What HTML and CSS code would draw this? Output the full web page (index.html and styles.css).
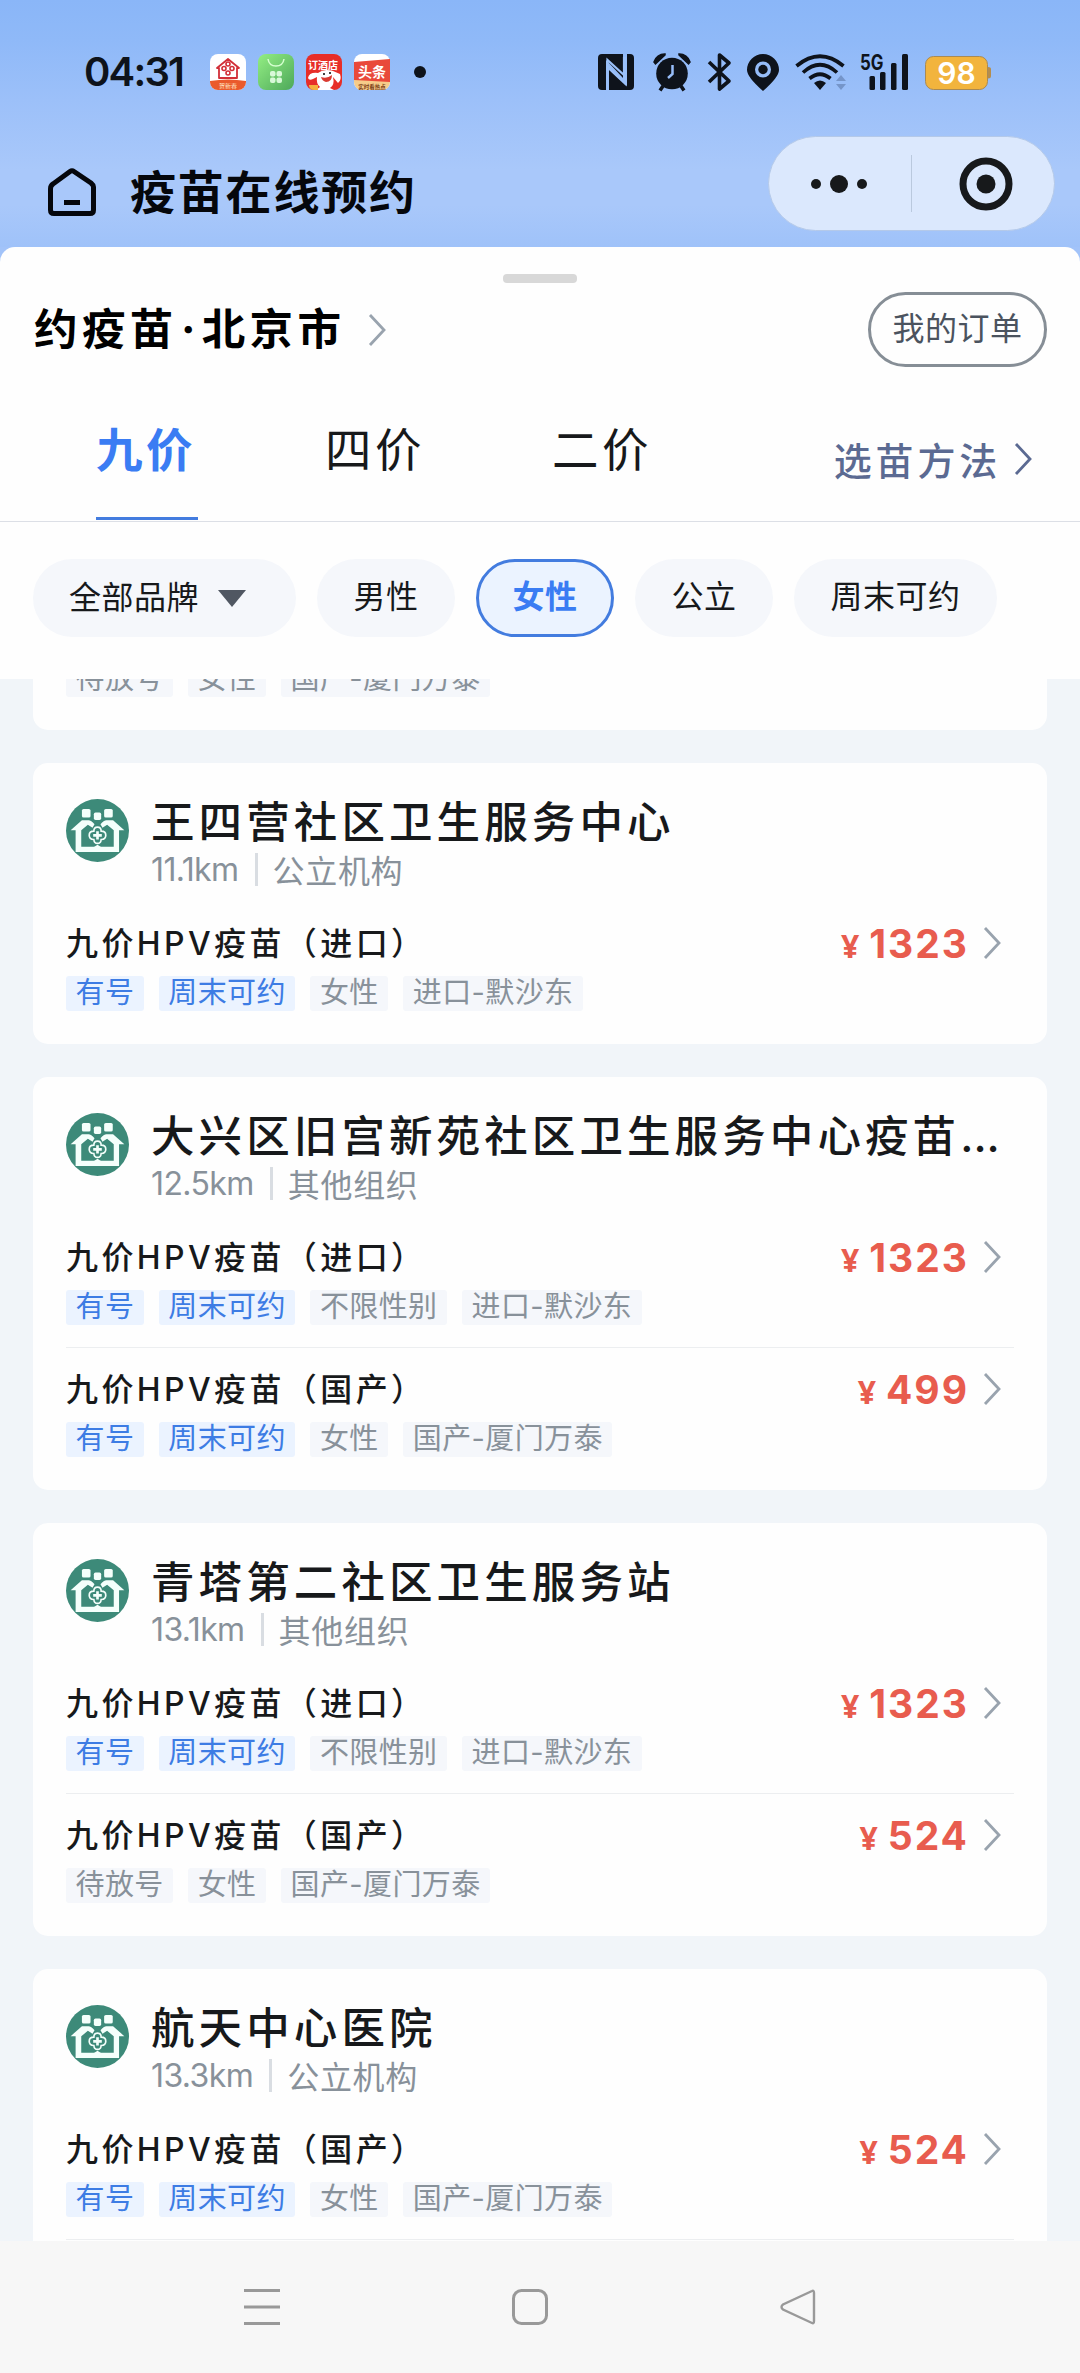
FILE: index.html
```html
<!DOCTYPE html>
<html lang="zh-CN">
<head>
<meta charset="utf-8">
<title>疫苗在线预约</title>
<link rel="stylesheet" href="styles.css">
</head>
<body>
<svg class="defs" width="0" height="0">
  <symbol id="chev" viewBox="0 0 18 34"><path d="M2 2 16 17 2 32" fill="none" stroke="currentColor" stroke-width="2.8"/></symbol>
  <symbol id="clinic" viewBox="0 0 190 190">
    <circle cx="95" cy="95" r="95" fill="#3d8a79"/>
    <g fill="#f4fffb">
      <rect x="48" y="30" width="26" height="26" rx="5"/>
      <rect x="115" y="30" width="26" height="26" rx="5"/>
      <rect x="84" y="41" width="22" height="22" rx="5"/>
      <path d="M14 94 48 64H68Q76 64 86 76L80 87 66 78 46 94V144H144V94L124 78 110 87 104 76Q114 64 122 64H142L176 94H160V160H29V94Z"/>
      <path d="M82 146 95 138 108 146Z"/>
    </g>
    <path d="M84 97Q84 85 95 85T106 97Q120 97 120 109T106 122Q105 134 95 134T84 122Q70 121 70 109T84 97Z" fill="#3d8a79" stroke="#f4fffb" stroke-width="5"/>
    <path d="M95 97V122M82 109.500H108" stroke="#f4fffb" stroke-width="8"/>
  </symbol>
</svg>
<div class="phone">
  <div class="top">
    <div class="status">
      <span class="time">04:31</span>
      <div class="apps">
        <svg viewBox="0 0 36 36"><rect width="36" height="36" rx="8" fill="#fff"/><path d="M0 27Q18 24 36 27V28A8 8 0 0 1 28 36H8A8 8 0 0 1 0 28Z" fill="#ea5a2c"/><path d="M7 14 18 5 29 14H27V24H9V14Z" fill="none" stroke="#d22f38" stroke-width="1.8" stroke-linejoin="round"/><g fill="none" stroke="#d22f38" stroke-width="1.6"><circle cx="18" cy="10" r="2"/><circle cx="14" cy="14.500" r="2"/><circle cx="22" cy="14.500" r="2"/><circle cx="18" cy="19" r="2"/></g><text x="18" y="34" text-anchor="middle" font-size="6" fill="#ffe3c0">贺新春</text></svg>
        <svg viewBox="0 0 36 36"><defs><linearGradient id="g" x2="1" y2="1"><stop stop-color="#93ee83"/><stop offset="1" stop-color="#4da85a"/></linearGradient></defs><rect width="36" height="36" rx="8" fill="url(#g)"/><path d="M10 5Q11 12 18 12T26 5" fill="none" stroke="#d5ffd0" stroke-width="1.500"/><g fill="#d8f9d8"><rect x="12" y="17" width="5.500" height="5.500" rx="2"/><rect x="18.500" y="17" width="5.500" height="5.500" rx="2"/><rect x="12" y="23.500" width="5.500" height="5.500" rx="2"/><rect x="18.500" y="23.500" width="5.500" height="5.500" rx="2"/></g></svg>
        <svg viewBox="0 0 36 36"><rect width="36" height="36" rx="8" fill="#e72e28"/><text x="17" y="15" text-anchor="middle" font-size="10" font-weight="700" fill="#fff">订酒店</text><path d="M2 24Q3 18 12 19 18 14 27 17L34 20Q36 26 32 29L27 23Q29 31 24 34L28 36H10L14 33Q10 30 11 23L7 25Q3 27 2 24Z" fill="#fff"/><path d="M15 23Q21 25 26 21 26 28 20 28 16 27 15 23Z" fill="#d93a30"/><circle cx="18" cy="20" r="1"/><circle cx="24" cy="19" r="1"/><path d="M3 31H12V36H8Q4 36 3 32Z" fill="#f4b03d"/></svg>
        <svg viewBox="0 0 36 36"><rect width="36" height="36" rx="8" fill="#fff"/><path d="M0 8 36 5V28H0Z" fill="#e9493a"/><path d="M0 26 36 28A8 8 0 0 1 28 36H8A8 8 0 0 1 0 28Z" fill="#f6cc8a"/><text x="18" y="23" text-anchor="middle" font-size="14" font-weight="700" fill="#fff">头条</text><text x="18" y="34.500" text-anchor="middle" font-size="5.500" font-weight="700" fill="#7a3b14">实时看热点</text></svg>
      </div>
      <i class="dot"></i>
      <svg class="sys" viewBox="598 50 396 44" width="396" height="44" fill="#0e131b">
        <path fill-rule="evenodd" d="M602 54H623V78L609 63 606 60V90H602Q598 90 598 86V58Q598 54 602 54ZM627 54H630Q634 54 634 58V86Q634 90 630 90H609V69L627 86Z"/><path d="M607.500 87V60L624 75V57M609.500 66V69L625.500 84V57" fill="none" stroke="#9ac0f9" stroke-width="2.200"/>
        <circle cx="672" cy="73.500" r="15.800"/><path d="M663 86 660 90.500M681 86 684 90.500" stroke="#0e131b" stroke-width="3.500"/><path d="M654 62A11 11 0 0 1 665 54L665 55 655.500 64ZM690 62A11 11 0 0 0 679 54L679 55 688.500 64Z" stroke="#0e131b" stroke-width="1.500"/><path d="M672.500 65V74L668 78" fill="none" stroke="#97bdf9" stroke-width="2.500"/>
        <path d="M709 62 729 81 719.500 89V55L729 63 709 82" fill="none" stroke="#0e131b" stroke-width="3.600" stroke-linejoin="round"/>
        <path fill-rule="evenodd" d="M763 54A16 16 0 0 1 779 70Q779 77 763 91 747 77 747 70A16 16 0 0 1 763 54ZM763 61.500A8 8 0 1 0 763 77.500 8 8 0 1 0 763 61.500Z"/><circle cx="763" cy="69.500" r="4.700"/>
        <g fill="none" stroke="#0e131b" stroke-width="3.700"><path d="M796.500 66Q820 46.500 843.500 66M803 72.500Q820 57 837 72.500M809.500 78.500Q820 70 830.500 78.500"/></g><path d="M814 83Q820 78 826 83L820 90Z"/>
        <path d="M836 81 841 75 846 81ZM836 84H846L841 90Z" fill="#7595c9"/>
        <text x="860" y="69.500" font-size="21" font-weight="700" textLength="23.500" lengthAdjust="spacingAndGlyphs" class="lat">5G</text>
        <rect x="869.500" y="76" width="5.500" height="14" rx="1.500"/><rect x="880" y="72" width="5.500" height="18" rx="1.500"/><rect x="891" y="63" width="5.500" height="27" rx="1.500"/><rect x="902" y="54" width="6" height="36" rx="1.500"/>
        <path d="M988 67Q991 67 991 69V76Q991 78.500 988 78.500Z" fill="#b58d4d"/><rect x="925.500" y="56.500" width="62" height="33" rx="8" fill="#f2b43d" stroke="#a98a54"/>
        <text x="956.500" y="84" font-size="30" font-weight="600" text-anchor="middle" fill="#fff" class="lat">98</text>
      </svg>
    </div>
    <div class="bar">
      <svg class="home" viewBox="0 0 48 48" width="48" height="48"><path d="M5 16Q2.500 17.500 2.500 21V42Q2.500 45.500 6 45.500H42Q45.500 45.500 45.500 42V19Q45.500 17 43 15L26 3.500Q24 2 22 3.500Z" fill="none" stroke="#05070c" stroke-width="5"/><path d="M16 34.500H32" stroke="#05070c" stroke-width="5"/></svg>
      <h1>疫苗在线预约</h1>
      <div class="capsule">
        <svg width="56" height="20" viewBox="0 0 56 20" fill="#17191b"><circle cx="5" cy="10" r="5"/><circle cx="28" cy="10" r="9"/><circle cx="51" cy="10" r="5"/></svg>
        <i></i>
        <svg width="54" height="54" viewBox="0 0 54 54"><circle cx="27" cy="27" r="23" fill="none" stroke="#17191b" stroke-width="7"/><circle cx="27" cy="27" r="9.500" fill="#17191b"/></svg>
      </div>
    </div>
  </div>

  <div class="sheet">
    <i class="handle"></i>
    <div class="city">
      <h2>约疫苗<span class="mid">·</span>北京市</h2>
      <svg class="chev"><use href="#chev"/></svg>
      <span class="orders">我的订单</span>
    </div>
    <div class="tabs">
      <span class="tab on">九价</span><span class="tab">四价</span><span class="tab">二价</span>
      <span class="how">选苗方法<svg class="chev"><use href="#chev"/></svg></span>
    </div>
    <div class="filters">
      <span class="pill brand">全部品牌<i></i></span><span class="pill">男性</span><span class="pill on">女性</span><span class="pill">公立</span><span class="pill">周末可约</span>
    </div>
  </div>

  <div class="list">
    <section class="card cut">
      <div class="tags"><b>待放号</b><b>女性</b><b>国产-厦门万泰</b></div>
    </section>
    <section class="card">
      <div class="head"><svg class="logo"><use href="#clinic"/></svg><div><h3>王四营社区卫生服务中心</h3><p><span>11.1km</span><i></i>公立机构</p></div></div>
      <div class="item"><div class="row"><span class="name">九价HPV疫苗（进口）</span><span class="price"><small>¥</small>1323</span><svg class="chev"><use href="#chev"/></svg></div><div class="tags"><b class="a">有号</b><b class="a">周末可约</b><b>女性</b><b>进口-默沙东</b></div></div>
    </section>
    <section class="card">
      <div class="head"><svg class="logo"><use href="#clinic"/></svg><div><h3>大兴区旧宫新苑社区卫生服务中心疫苗<span class="dots">...</span></h3><p><span>12.5km</span><i></i>其他组织</p></div></div>
      <div class="item"><div class="row"><span class="name">九价HPV疫苗（进口）</span><span class="price"><small>¥</small>1323</span><svg class="chev"><use href="#chev"/></svg></div><div class="tags"><b class="a">有号</b><b class="a">周末可约</b><b>不限性别</b><b>进口-默沙东</b></div></div>
      <div class="item"><div class="row"><span class="name">九价HPV疫苗（国产）</span><span class="price"><small>¥</small>499</span><svg class="chev"><use href="#chev"/></svg></div><div class="tags"><b class="a">有号</b><b class="a">周末可约</b><b>女性</b><b>国产-厦门万泰</b></div></div>
    </section>
    <section class="card">
      <div class="head"><svg class="logo"><use href="#clinic"/></svg><div><h3>青塔第二社区卫生服务站</h3><p><span>13.1km</span><i></i>其他组织</p></div></div>
      <div class="item"><div class="row"><span class="name">九价HPV疫苗（进口）</span><span class="price"><small>¥</small>1323</span><svg class="chev"><use href="#chev"/></svg></div><div class="tags"><b class="a">有号</b><b class="a">周末可约</b><b>不限性别</b><b>进口-默沙东</b></div></div>
      <div class="item"><div class="row"><span class="name">九价HPV疫苗（国产）</span><span class="price"><small>¥</small>524</span><svg class="chev"><use href="#chev"/></svg></div><div class="tags"><b>待放号</b><b>女性</b><b>国产-厦门万泰</b></div></div>
    </section>
    <section class="card">
      <div class="head"><svg class="logo"><use href="#clinic"/></svg><div><h3>航天中心医院</h3><p><span>13.3km</span><i></i>公立机构</p></div></div>
      <div class="item"><div class="row"><span class="name">九价HPV疫苗（国产）</span><span class="price"><small>¥</small>524</span><svg class="chev"><use href="#chev"/></svg></div><div class="tags"><b class="a">有号</b><b class="a">周末可约</b><b>女性</b><b>国产-厦门万泰</b></div></div>
      <div class="item"></div>
    </section>
  </div>

  <nav class="nav">
    <svg width="36" height="36" viewBox="0 0 36 36"><path d="M0 1.500H36M0 18H36M0 34.500H36"/></svg>
    <svg width="36" height="36" viewBox="0 0 36 36"><rect x="1.500" y="1.500" width="33" height="33" rx="8"/></svg>
    <svg width="36" height="36" viewBox="0 0 36 36"><path d="M32 2Q34 1 34 4V32Q34 35 32 34L3 20.500Q0 18 3 15.500Z" stroke-width="2.400"/></svg>
  </nav>
</div>
</body>
</html>
```
FILE: styles.css
```css
* { box-sizing: border-box; margin: 0; padding: 0; }
body {
  width: 1080px;
  font-family: Inter, "Noto Sans CJK SC", sans-serif;
  font-weight: 400;
  color: #17191b;
}
i { font-style: normal; }
svg { flex: none; display: block; }
.defs { position: absolute; }
.lat { font-family: Inter, sans-serif; }
.phone { height: 2373px; display: flex; flex-direction: column; overflow: hidden; background: #a2c3f9; }

.top { height: 247px; flex: none; background: linear-gradient(#8ab6f8 0, #8fb9f8 40px, #9cc0f9 100px, #a9c8fa 170px, #a9c8fa 205px, #9fc2f9 247px); }
.status { display: flex; align-items: center; height: 94px; padding: 50px 0 0 84px; }
.time { width: 126px; font-size: 40px; font-weight: 600; line-height: 44px; letter-spacing: -1.8px; color: #0e131b; }
.apps { display: flex; gap: 12px; }
.apps svg { width: 36px; height: 36px; }
.dot { width: 12px; height: 12px; margin: 0 172px 0 24px; border-radius: 50%; background: #0e131b; }
.bar { display: flex; align-items: center; padding: 42px 25px 0 48px; }
.home { margin-top: 17px; }
h1 { flex: 1; margin: 17px 0 0 34px; font-size: 46px; line-height: 60px; letter-spacing: 1.8px; color: #05070c; }
.capsule { display: flex; align-items: center; width: 287px; height: 95px; border: 1px solid #b4c9e9; border-radius: 48px; background: #dbe8fd; padding-left: 42px; }
.capsule i { width: 1px; height: 57px; margin: 0 47px 0 44px; background: #bac9de; }

.sheet { height: 432px; flex: none; background: #fefefe; border-radius: 15px 15px 0 0; padding-top: 27px; }
.handle { display: block; width: 74px; height: 9px; margin: 0 auto; border-radius: 4px; background: #d8d8d8; }
.city { display: flex; align-items: center; height: 93px; padding: 0 33px 0 34px; color: #000; }
h2 { margin-top: -2px; font-size: 43.500px; letter-spacing: 4.400px; line-height: 60px; white-space: nowrap; }
.mid { display: inline-block; width: 24px; text-align: center; letter-spacing: 0; text-indent: -3px; }
.chev { width: 18px; height: 34px; color: #99a3ae; }
.city .chev { margin-left: 23px; }
.orders { margin-left: auto; width: 179px; height: 75px; border: 3px solid #868e96; border-radius: 38px; text-align: center; font-size: 32px; line-height: 68px; letter-spacing: .5px; color: #4b535e; }
.tabs { display: flex; height: 146px; padding-left: 96px; border-bottom: 1px solid #dcdfe6; }
.tab { width: 102px; height: 144px; margin-right: 127px; padding-top: 44px; font-size: 46.500px; line-height: 60px; letter-spacing: 3.500px; white-space: nowrap; border-bottom: 3px solid transparent; }
.tab.on { font-weight: 700; color: #3a7cf3; border-color: #437cdf; }
.tab + .tab { margin-right: 125px; }
.tab + .tab + .tab { margin-right: 0; }
.how { display: flex; align-items: center; height: 60px; margin: 52px 48px 0 auto; font-size: 38px; font-weight: 500; letter-spacing: 3.800px; color: #5b6a92; }
.how .chev { margin: 2px 0 0 13px; color: #5b6a92; }
.filters { display: flex; gap: 21px; padding: 37px 33px 0; }
.pill { width: 138px; height: 78px; border-radius: 39px; background: #f5f7fb; text-align: center; font-size: 32px; line-height: 75px; letter-spacing: .5px; white-space: nowrap; }
.pill:last-child { width: 203px; }
.pill.on { border: 3px solid #437cdf; background: #ebf3ff; color: #3a7cf3; font-weight: 700; line-height: 70px; }
.brand { display: flex; align-items: center; width: 263px; padding-left: 36px; line-height: 74px; }
.brand i { margin: 0 0 0 19px; border: 14px solid transparent; border-top: 17px solid #505762; border-bottom: 0; }

.list { flex: 1; min-height: 0; overflow: hidden; padding: 0 33px; background: #f1f5f9; }
.card { margin-bottom: 33px; padding: 0 33px 11px; background: #fefefe; border-radius: 15px; }
.cut { height: 68px; margin-top: -17px; }
.head { display: flex; height: 139px; padding-top: 36px; }
.logo { width: 63px; height: 63px; margin-right: 22px; }
h3 { height: 46px; font-size: 43.500px; font-weight: 500; line-height: 47px; letter-spacing: 4.100px; white-space: nowrap; }
.dots { letter-spacing: 0; }
.head p { display: flex; align-items: center; height: 48px; font-size: 32px; letter-spacing: .7px; color: #88919a; }
.head p span { letter-spacing: -.6px; }
.head p i { width: 3px; height: 33px; margin: 0 15px 0 16px; background: #d9dde2; }
.item { height: 131px; padding-top: 18px; }
.item + .item { height: 132px; border-top: 1px solid #eceef0; }
.row { display: flex; align-items: center; height: 44px; }
.name { flex: 1; margin-top: -3px; font-size: 32px; font-weight: 500; letter-spacing: 3.400px; white-space: nowrap; }
.price { margin-top: 2px; font-size: 39px; font-weight: 700; letter-spacing: 2px; color: #e85c4e; }
.price small { margin-right: 8px; font-family: "Noto Sans", sans-serif; font-size: 32px; }
.row .chev { margin: 2px 13px 0 14px; }
.tags { display: flex; gap: 15px; }
.row + .tags { margin-top: 12px; }
.tags b { height: 35px; padding: 0 9.500px; border-radius: 3px; background: #f5f7fb; color: #88919a; font-size: 29px; font-weight: 400; line-height: 34px; letter-spacing: .4px; white-space: nowrap; }
.tags .a { background: #ebf3ff; color: #3d7ce4; }

.nav { height: 132px; flex: none; display: flex; gap: 232px; padding: 48px 0 0 244px; background: #f7f7f7; fill: none; stroke: #999; stroke-width: 3; }
```
